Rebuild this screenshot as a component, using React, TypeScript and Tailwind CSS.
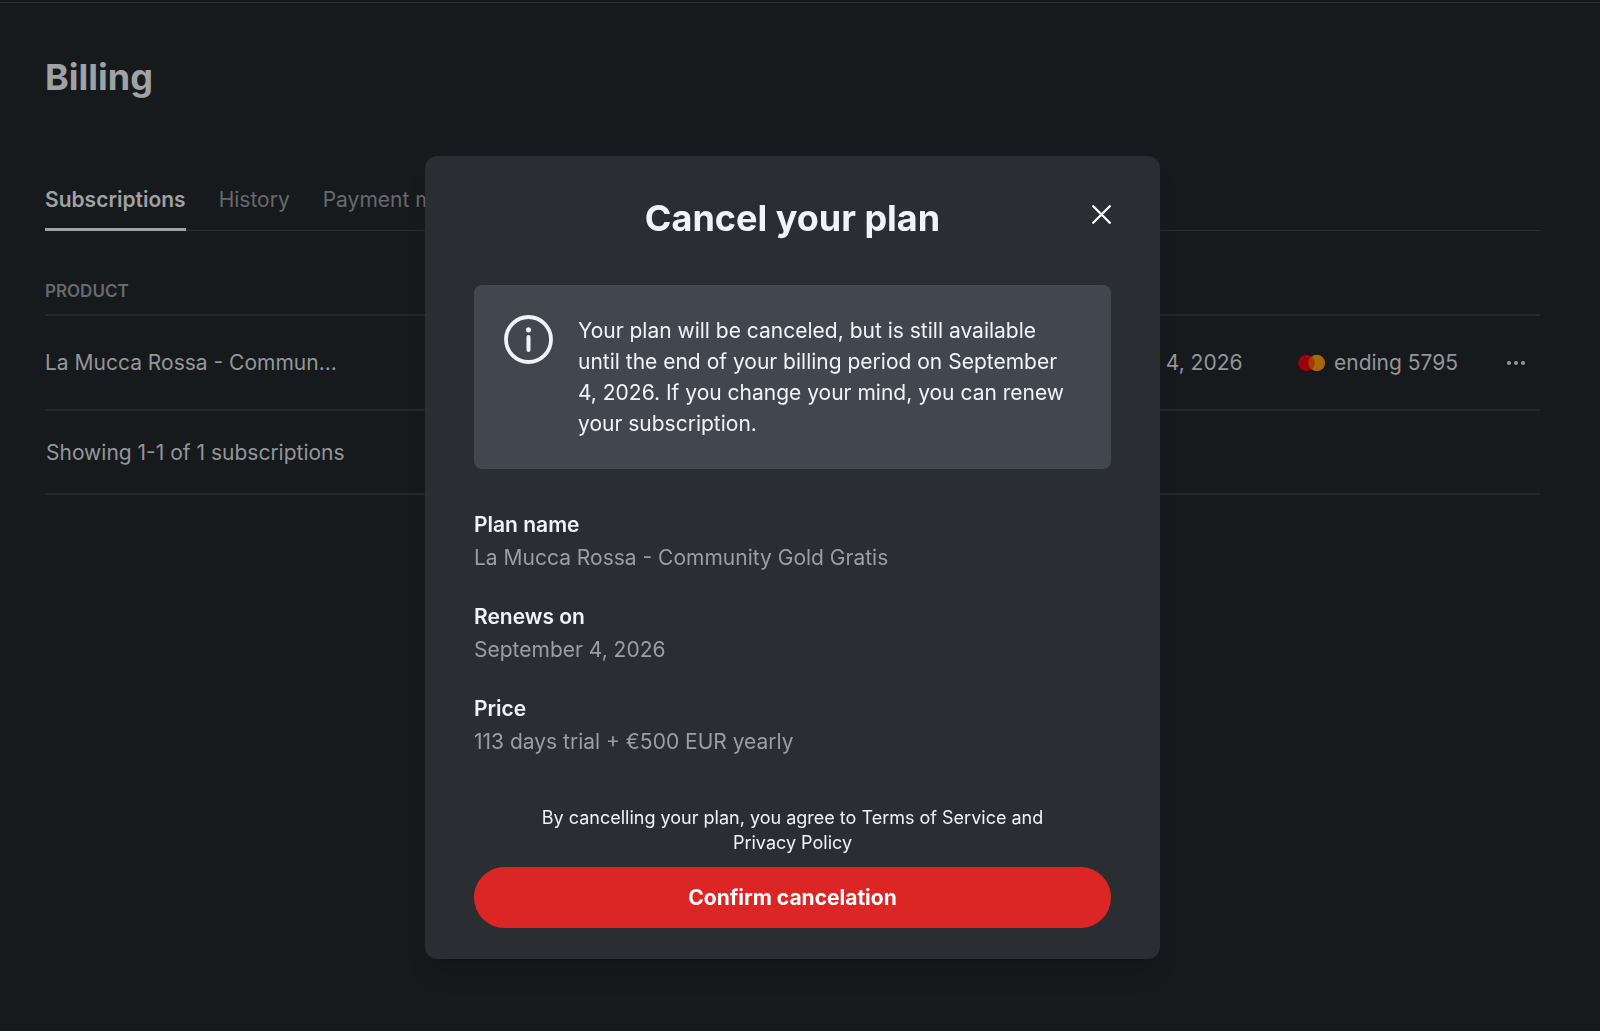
import React from 'react';

const tabs = ['Subscriptions', 'History', 'Payment methods'];

const details = [
  { label: 'Plan name', value: 'La Mucca Rossa - Community Gold Gratis' },
  { label: 'Renews on', value: 'September 4, 2026' },
  { label: 'Price', value: '113 days trial + €500 EUR yearly' },
];

function CardLogo() {
  return (
    <svg width="28" height="18" viewBox="0 0 28 18" aria-hidden="true">
      <circle cx="8.4" cy="9" r="8.3" fill="#990009" />
      <circle cx="18.8" cy="9" r="8.3" fill="#a8670a" />
      <path d="M13.6 2.5a8.3 8.3 0 0 1 0 13a8.3 8.3 0 0 1 0-13z" fill="#a13a06" />
    </svg>
  );
}

function InfoIcon() {
  return (
    <svg className="shrink-0" width="49" height="49" viewBox="0 0 49 49" fill="none" aria-hidden="true">
      <circle cx="24.5" cy="24.5" r="22.5" stroke="#f1f3f9" strokeWidth="3.8" />
      <circle cx="24.5" cy="14.8" r="2.6" fill="#f1f3f9" />
      <path d="M24.5 22v13" stroke="#f1f3f9" strokeWidth="4" strokeLinecap="round" />
    </svg>
  );
}

function BillingPage() {
  return (
    <main className="mt-[2px] min-h-screen border-t border-[#2a2d31] pt-[55px] pr-[60px] pl-[45px]">
      <h1 className="text-[36px] leading-[38px] font-bold text-[#a0a2a4]">Billing</h1>

      <nav className="mt-[86px] flex gap-[33px] border-b border-[#2a2d31]">
        {tabs.map((tab, i) => (
          <a
            key={tab}
            href="#"
            className={
              i === 0
                ? '-mb-px border-b-3 border-[#a0a2a4] pb-[10px] text-[21px] leading-9 font-semibold text-[#a0a2a4]'
                : '-mb-px border-b-3 border-transparent pb-[10px] text-[21px] leading-9 text-[#67696c]'
            }
          >
            {tab}
          </a>
        ))}
      </nav>

      <table className="mt-9 w-full table-fixed text-left text-[21px] text-[#94969a]">
        <thead>
          <tr className="h-12 border-b-2 border-[#25282b] text-[17px] text-[#67696c]">
            <th className="pt-[2px] font-semibold">PRODUCT</th>
            <th className="w-[247px]"></th>
            <th className="w-[200px]"></th>
            <th className="w-[42px]"></th>
          </tr>
        </thead>
        <tbody>
          <tr className="h-[95px] border-b-2 border-[#25282b]">
            <td>La Mucca Rossa - Commun...</td>
            <td>September 4, 2026</td>
            <td>
              <span className="flex items-center gap-2">
                <CardLogo />
                ending 5795
              </span>
            </td>
            <td>
              <button type="button" aria-label="More options" className="flex gap-[3px] py-2 pl-[9px]">
                <span className="size-1 rounded-full bg-[#94969a]" />
                <span className="size-1 rounded-full bg-[#94969a]" />
                <span className="size-1 rounded-full bg-[#94969a]" />
              </button>
            </td>
          </tr>
        </tbody>
      </table>
      <p className="border-b-2 border-[#25282b] pt-6 pb-[22px] pl-px text-[21px] leading-9 text-[#94969a]">
        Showing 1-1 of 1 subscriptions
      </p>
    </main>
  );
}

function CancelDialog() {
  return (
    <div className="fixed inset-0 flex items-start justify-center overflow-hidden pt-[156px] pr-[15px]">
      <div
        role="dialog"
        aria-modal="true"
        aria-labelledby="cancel-title"
        className="w-full max-w-[735px] rounded-xl bg-[#2a2d31] px-[49px] pt-9 pb-[31px] text-[#f1f3f9] shadow-xl"
      >
        <div className="grid grid-cols-[1fr_auto_1fr] items-start">
          <h2 id="cancel-title" className="col-start-2 text-[36px] leading-[52px] font-bold">
            Cancel your plan
          </h2>
          <button type="button" aria-label="Close" className="mt-[13px] justify-self-end">
            <svg width="19" height="19" viewBox="0 0 19 19" fill="none" stroke="#fff" strokeWidth="2.3" strokeLinecap="round">
              <path d="M1.2 1.2l16.6 16.6M17.8 1.2L1.2 17.8" />
            </svg>
          </button>
        </div>

        <div className="mt-[41px] flex gap-[25px] rounded-lg bg-[#42464e] py-[30px] pr-9 pl-[30px]">
          <InfoIcon />
          <p className="text-[21px] leading-[31px]">
            Your plan will be canceled, but is still available until the end of your billing period on September 4,
            2026. If you change your mind, you can renew your subscription.
          </p>
        </div>

        <dl className="mt-[39px] flex flex-col gap-[26px] text-[21px] leading-[33px]">
          {details.map((item) => (
            <div key={item.label}>
              <dt className="font-semibold text-[#f1f3f9]">{item.label}</dt>
              <dd className="text-[#9c9ea2]">{item.value}</dd>
            </div>
          ))}
        </dl>

        <p className="mt-[47px] px-12 text-center text-[18px] leading-[25px]">
          By cancelling your plan, you agree to <a href="#">Terms of Service</a> and <a href="#">Privacy Policy</a>
        </p>
        <button
          type="button"
          className="mt-3 h-[61px] w-full rounded-full bg-[#dc2626] text-[21px] font-bold text-white"
        >
          Confirm cancelation
        </button>
      </div>
    </div>
  );
}

export default function App() {
  return (
    <div className="h-screen overflow-hidden bg-[#171a1d] font-['Inter',sans-serif]">
      <BillingPage />
      <CancelDialog />
    </div>
  );
}
